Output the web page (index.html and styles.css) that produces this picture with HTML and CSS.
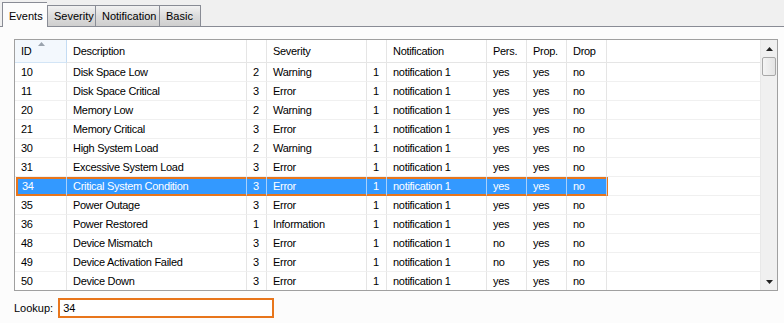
FILE: index.html
```html
<!DOCTYPE html>
<html lang="en">
<head>
    <meta charset="UTF-8">
    <title>Events</title>
    <link rel="stylesheet" href="styles.css">
</head>
<body>

    <div class="tabs">
        <div class="tab active">Events</div>
        <div class="tab">Severity</div>
        <div class="tab">Notification</div>
        <div class="tab">Basic</div>
    </div>

    <div class="panel">
        <div class="grid">
            <div class="view">
                <div class="head">
                    <div class="cells">
                        <div class="c id sorted">ID
                            <svg class="arrow" width="7" height="4" viewBox="0 0 7 4"><path d="M0 4 L3.5 0 L7 4 Z" fill="#9aa3ad"/></svg>
                        </div>
                        <div class="c desc">Description</div>
                        <div class="c n"></div>
                        <div class="c sev">Severity</div>
                        <div class="c n"></div>
                        <div class="c noti">Notification</div>
                        <div class="c yn">Pers.</div>
                        <div class="c yn">Prop.</div>
                        <div class="c yn">Drop</div>
                    </div>
                    <div class="fill"></div>
                </div>
                <div class="rows"></div>
            </div>
            <div class="scroll">
                <div class="btn"><svg width="7" height="4" viewBox="0 0 7 4"><path d="M0 4 L3.5 0 L7 4 Z" fill="#222"/></svg></div>
                <div class="thumb"></div>
                <div class="track"></div>
                <div class="btn"><svg width="7" height="4" viewBox="0 0 7 4"><path d="M0 0 L3.5 4 L7 0 Z" fill="#222"/></svg></div>
            </div>
        </div>

        <div class="lookup">
            <label for="lk">Lookup:</label>
            <input id="lk" type="text" value="34">
        </div>
    </div>

    <script>
        const arr = [
            [10, 'Disk Space Low', 2, 'Warning', 'yes'],
            [11, 'Disk Space Critical', 3, 'Error', 'yes'],
            [20, 'Memory Low', 2, 'Warning', 'yes'],
            [21, 'Memory Critical', 3, 'Error', 'yes'],
            [30, 'High System Load', 2, 'Warning', 'yes'],
            [31, 'Excessive System Load', 3, 'Error', 'yes'],
            [34, 'Critical System Condition', 3, 'Error', 'yes'],
            [35, 'Power Outage', 3, 'Error', 'yes'],
            [36, 'Power Restored', 1, 'Information', 'yes'],
            [48, 'Device Mismatch', 3, 'Error', 'no'],
            [49, 'Device Activation Failed', 3, 'Error', 'no'],
            [50, 'Device Down', 3, 'Error', 'yes']
        ]
        const root = document.querySelector('div.rows')
        arr.forEach(d => {
            let tag = ''
            tag += `<div class="row${d[0] == 34 ? ' selected' : ''}">`
            tag += `  <div class="cells">`
            tag += `    <div class="c id">${d[0]}</div>`
            tag += `    <div class="c desc">${d[1]}</div>`
            tag += `    <div class="c n">${d[2]}</div>`
            tag += `    <div class="c sev">${d[3]}</div>`
            tag += `    <div class="c n">1</div>`
            tag += `    <div class="c noti">notification 1</div>`
            tag += `    <div class="c yn">${d[4]}</div>`
            tag += `    <div class="c yn">yes</div>`
            tag += `    <div class="c yn">no</div>`
            tag += `  </div>`
            tag += `  <div class="fill"></div>`
            tag += `</div>`
            root.innerHTML += tag
        })
    </script>
</body>
</html>
```

FILE: styles.css
```css
body {
    margin: 0;
    width: 784px;
    height: 323px;
    background: #f0f0f0;
    font-family: "Liberation Sans", Arial, sans-serif;
    font-size: 11px;
    color: #000;
    overflow: hidden;
}

/* tab strip */
.tabs {
    display: flex;
    align-items: flex-end;
    height: 26px;
    padding-left: 2px;
    box-sizing: border-box;
    position: relative;
    z-index: 1;
}
.tab {
    height: 21px;
    line-height: 21px;
    padding: 0 6px;
    box-sizing: border-box;
    border: 1px solid #898c95;
    border-bottom: none;
    border-left: none;
    background: linear-gradient(#f2f2f2, #dcdcdc 50%, #cfcfcf);
}
.tab:nth-child(2) {
    border-left: 1px solid #898c95;
    width: 49px;
}
.tab:nth-child(3) { width: 64px; }
.tab:nth-child(4) { width: 41px; }
.tab.active {
    height: 25px;
    line-height: 26px;
    width: 45px;
    padding: 0 6px;
    border-left: 1px solid #898c95;
    border-right: none;
    background: #fcfcfc;
    margin-bottom: -1px;
}

.panel {
    background: #fcfcfc;
    border-top: 1px solid #898c95;
    height: 297px;
    box-sizing: border-box;
    padding: 12px 6px 0 14px;
}

/* data grid */
.grid {
    display: flex;
    width: 764px;
    height: 252px;
    border: 1px solid #a0a0a0;
    box-sizing: border-box;
    background: #fff;
    letter-spacing: -0.3px;
}
.view {
    width: 745px;
    overflow: hidden;
}
.head, .row {
    display: flex;
}
.cells {
    display: flex;
    width: 592px;
    flex: none;
}
.fill {
    flex: 1;
    box-sizing: border-box;
}
.c {
    box-sizing: border-box;
    padding-left: 6px;
    white-space: nowrap;
    overflow: hidden;
    border-right: 1px solid #e5e5e5;
}
.id { width: 52px; }
.desc { width: 180px; }
.n { width: 20px; }
.sev { width: 100px; }
.noti { width: 100px; }
.yn { width: 40px; }

.head .c, .head .fill {
    height: 23px;
    line-height: 23px;
    border-bottom: 1px solid #e5e5e5;
}
.head .c.sorted {
    position: relative;
    background: #f3f8fd;
    border-right-color: #c4dcf3;
    border-bottom-color: #d3e5f6;
}
.arrow {
    position: absolute;
    left: 23px;
    top: 2px;
}

.row .c, .row .fill {
    height: 19px;
    line-height: 18px;
    border-bottom: 1px solid #f0f0f0;
}
.row.selected .cells {
    background: #3399ff;
    color: #fff;
    box-shadow: inset 0 0 0 2px #e8761c;
    margin-left: 1px;
    width: 592px;
    position: relative;
}
.row.selected .c {
    border-right-color: #a9d1fa;
    border-bottom-color: transparent;
}
.row.selected .c.id { width: 51px; }

/* scrollbar */
.scroll {
    width: 17px;
    display: flex;
    flex-direction: column;
    background: #f0f0f0;
    border-left: 1px solid #e8e8e8;
    box-sizing: border-box;
}
.btn {
    height: 17px;
    display: flex;
    align-items: center;
    justify-content: center;
}
.thumb {
    height: 17px;
    margin: 0 1px;
    border: 1px solid #a8a8a8;
    border-radius: 2px;
    background: linear-gradient(90deg, #f4f4f4, #e4e4e4);
}
.track {
    flex: 1;
}

/* lookup */
.lookup {
    display: flex;
    align-items: center;
    margin-top: 7px;
    gap: 5px;
}
.lookup input {
    width: 216px;
    height: 20px;
    box-sizing: border-box;
    border: 2px solid #e8761c;
    padding: 0 3px;
    font-family: "Liberation Sans", Arial, sans-serif;
    font-size: 11px;
    outline: none;
    background: #fff;
}
```
